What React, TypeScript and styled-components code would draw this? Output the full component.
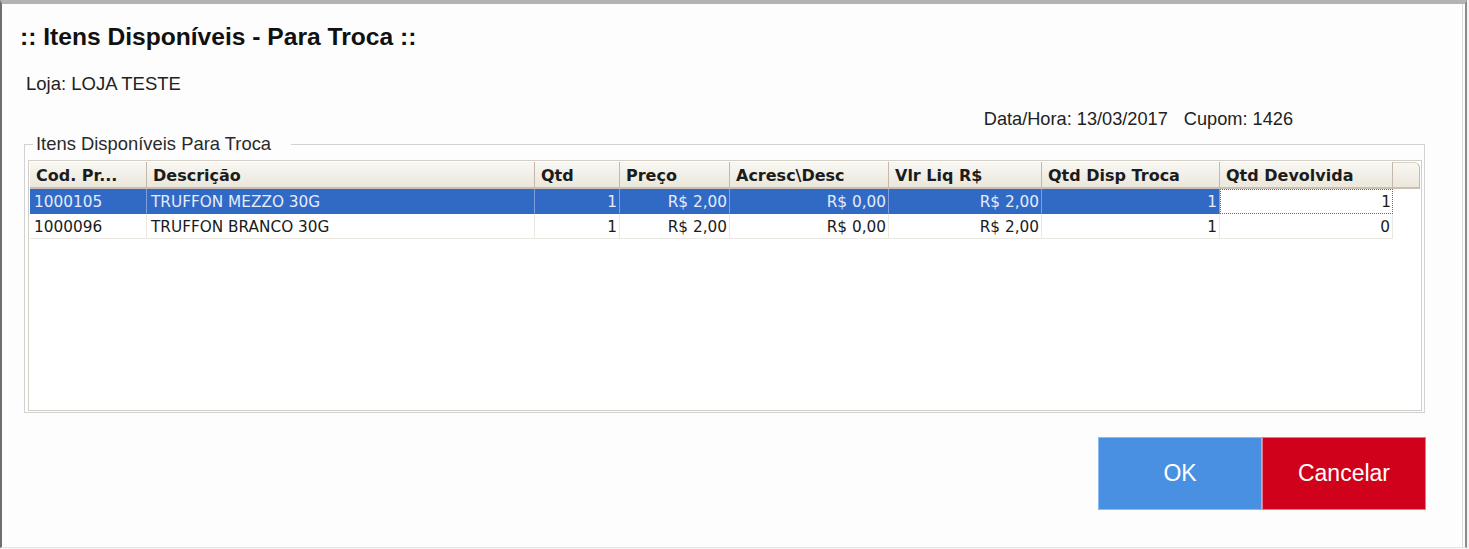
import React from "react";
import styled, { createGlobalStyle, css } from "styled-components";

const GlobalStyle = createGlobalStyle`
  html, body {
    margin: 0;
    padding: 0;
    background: #f4f4f4;
  }
  body {
    font-family: "Liberation Sans", Arial, sans-serif;
  }
`;

type Align = "left" | "right";

interface Column {
  title: string;
  width: number;
  align: Align;
}

const columns: Column[] = [
  { title: "Cod. Pr...", width: 117, align: "left" },
  { title: "Descrição", width: 388, align: "left" },
  { title: "Qtd", width: 85, align: "right" },
  { title: "Preço", width: 110, align: "right" },
  { title: "Acresc\\Desc", width: 159, align: "right" },
  { title: "Vlr Liq R$", width: 153, align: "right" },
  { title: "Qtd Disp Troca", width: 178, align: "right" },
  { title: "Qtd Devolvida", width: 173, align: "right" },
];

const FILLER = 27;

const rows = [
  ["1000105", "TRUFFON MEZZO 30G", "1", "R$ 2,00", "R$ 0,00", "R$ 2,00", "1", "1"],
  ["1000096", "TRUFFON BRANCO 30G", "1", "R$ 2,00", "R$ 0,00", "R$ 2,00", "1", "0"],
];

const gridTemplate = columns.map((c) => `${c.width}px`).join(" ");

const Window = styled.div`
  box-sizing: border-box;
  width: 1467px;
  height: 548px;
  background: #fdfdfd;
  border-top: 4px solid #b3b3b3;
  border-left: 2px solid #6f6f6f;
  border-right: 2px solid #8a8a8a;
  border-bottom: 1px solid #e6e6e6;
  box-shadow: inset -2px 0 0 #fdfdfd, inset -3px 0 0 #dadada;
  display: flex;
  flex-direction: column;
`;

const Title = styled.h1`
  margin: 19px 0 0 18px;
  font-family: "Liberation Sans", Arial, sans-serif;
  font-size: 24.6px;
  line-height: 28px;
  font-weight: bold;
  color: #111;
`;

const StoreLabel = styled.div`
  margin: 22px 0 0 24px;
  font-size: 18.5px;
  line-height: 22px;
  color: #222;
`;

const InfoRow = styled.div`
  margin-top: 13px;
  padding-right: 172px;
  display: flex;
  justify-content: flex-end;
  gap: 16px;
  font-size: 18.2px;
  line-height: 22px;
  color: #222;
`;

const Group = styled.fieldset`
  box-sizing: border-box;
  width: 1401px;
  margin: 5px 0 0 22px;
  padding: 7px 2px 1px 3px;
  border: 1px solid #d2d2d2;
  min-width: 0;
`;

const GroupTitle = styled.legend`
  margin-left: 5px;
  padding: 0 20px 0 3px;
  font-size: 18.4px;
  line-height: 18px;
  color: #2a2a2a;
`;

const ScrollPane = styled.div`
  box-sizing: border-box;
  height: 251px;
  border: 1px solid #d3cec6;
  padding: 1px;
  background: #fff;
  font-family: "DejaVu Sans", Verdana, sans-serif;
`;

const HeaderRow = styled.div`
  display: grid;
  grid-template-columns: ${gridTemplate} ${FILLER}px;
  height: 27px;
`;

const HeaderCell = styled.div<{ $filler?: boolean }>`
  box-sizing: border-box;
  display: flex;
  align-items: center;
  padding: 2px 0 0 6px;
  background: linear-gradient(#f8f7f2, #ebe7dc);
  border-right: 1px solid #c4b8aa;
  border-bottom: 2px solid #c9beb1;
  font-size: 16px;
  font-weight: bold;
  color: #1c1c1c;
  white-space: nowrap;
  overflow: hidden;
  ${(p) =>
    p.$filler &&
    css`
      border-top-right-radius: 6px;
      border-top: 1px solid #d9d2c6;
    `}
`;

const BodyRow = styled.div`
  display: grid;
  grid-template-columns: ${gridTemplate};
  height: 25px;
`;

const Cell = styled.div<{ $align: Align; $selected?: boolean; $focus?: boolean }>`
  box-sizing: border-box;
  display: flex;
  align-items: center;
  justify-content: ${(p) => (p.$align === "right" ? "flex-end" : "flex-start")};
  padding: ${(p) => (p.$align === "right" ? "1px 2px 0 0" : "1px 0 0 4px")};
  font-size: 15.3px;
  white-space: nowrap;
  overflow: hidden;
  background: #fff;
  color: #1a1a1a;
  border-right: 1px solid #ebe8e1;
  border-bottom: 1px solid #ebe8e1;
  ${(p) =>
    p.$selected &&
    css`
      background: #316ac5;
      color: #e4ecfa;
      border-right-color: #7d9fdc;
      border-bottom-color: #316ac5;
    `}
  ${(p) =>
    p.$focus &&
    css`
      background: #fff;
      color: #1a1a1a;
      border: 1px dotted #6d6d6d;
      padding-right: 1px;
    `}
`;

const Actions = styled.div`
  display: flex;
  justify-content: flex-end;
  margin-top: 24px;
  padding-right: 39px;
`;

const ActionButton = styled.button<{ $variant: "primary" | "danger" }>`
  box-sizing: border-box;
  width: 164px;
  height: 73px;
  margin: 0;
  font-family: "Liberation Sans", Arial, sans-serif;
  font-size: 23px;
  color: #fff;
  cursor: pointer;
  ${(p) =>
    p.$variant === "primary"
      ? css`
          background: #4a90e2;
          border: 1px solid #8cb9ee;
        `
      : css`
          background: #d0021b;
          border: 1px solid #e3798a;
        `}
`;

export default function App() {
  return (
    <>
      <GlobalStyle />
      <Window>
        <Title>:: Itens Disponíveis - Para Troca ::</Title>
        <StoreLabel>Loja: LOJA TESTE</StoreLabel>
        <InfoRow>
          <span>Data/Hora: 13/03/2017</span>
          <span>Cupom: 1426</span>
        </InfoRow>
        <Group>
          <GroupTitle>Itens Disponíveis Para Troca</GroupTitle>
          <ScrollPane>
            <HeaderRow>
              {columns.map((c) => (
                <HeaderCell key={c.title}>{c.title}</HeaderCell>
              ))}
              <HeaderCell $filler />
            </HeaderRow>
            {rows.map((row, ri) => (
              <BodyRow key={row[0]}>
                {row.map((value, ci) => (
                  <Cell
                    key={ci}
                    $align={columns[ci].align}
                    $selected={ri === 0}
                    $focus={ri === 0 && ci === columns.length - 1}
                  >
                    {value}
                  </Cell>
                ))}
              </BodyRow>
            ))}
          </ScrollPane>
        </Group>
        <Actions>
          <ActionButton $variant="primary">OK</ActionButton>
          <ActionButton $variant="danger">Cancelar</ActionButton>
        </Actions>
      </Window>
    </>
  );
}
